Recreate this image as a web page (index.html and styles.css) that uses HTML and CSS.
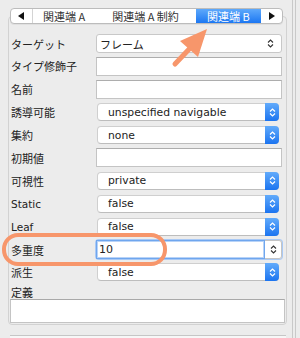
FILE: index.html
```html
<!DOCTYPE html>
<html lang="ja">
<head>
    <meta charset="UTF-8">
    <title>関連端 B</title>
    <link rel="stylesheet" href="styles.css">
</head>
<body>
<div class="window">
    <div class="frame">

        <!-- タブ -->
        <div class="tabs">
            <span class="seg nav">
                <svg width="6" height="8" viewBox="0 0 6 8"><path d="M6 0 L0 4 L6 8 Z" fill="#111"/></svg>
            </span>
            <span class="seg tab-a">関連端 A</span>
            <span class="seg tab-ac">関連端 A 制約</span>
            <span class="seg tab-b selected">関連端 B</span>
            <span class="seg nav">
                <svg width="6" height="8" viewBox="0 0 6 8"><path d="M0 0 L6 4 L0 8 Z" fill="#111"/></svg>
            </span>
        </div>

        <div class="box">
            <div class="form">
                <label>ターゲット</label>
                <div class="field select-plain">
                    <span class="value">フレーム</span>
                    <svg class="chev" width="7" height="11" viewBox="0 0 7 11"><path d="M1 4.5 L3.5 2 L6 4.5 M1 6.5 L3.5 9 L6 6.5" fill="none" stroke="#333" stroke-width="1.1"/></svg>
                </div>

                <label>タイプ修飾子</label>
                <div class="field text"></div>

                <label>名前</label>
                <div class="field text"></div>

                <label>誘導可能</label>
                <div class="popup">
                    <span class="value">unspecified navigable</span>
                    <span class="stepper"><svg width="7" height="11" viewBox="0 0 7 11"><path d="M1 4.5 L3.5 2 L6 4.5 M1 6.5 L3.5 9 L6 6.5" fill="none" stroke="#fff" stroke-width="1.2"/></svg></span>
                </div>

                <label>集約</label>
                <div class="popup">
                    <span class="value">none</span>
                    <span class="stepper"><svg width="7" height="11" viewBox="0 0 7 11"><path d="M1 4.5 L3.5 2 L6 4.5 M1 6.5 L3.5 9 L6 6.5" fill="none" stroke="#fff" stroke-width="1.2"/></svg></span>
                </div>

                <label>初期値</label>
                <div class="field text"></div>

                <label>可視性</label>
                <div class="popup">
                    <span class="value">private</span>
                    <span class="stepper"><svg width="7" height="11" viewBox="0 0 7 11"><path d="M1 4.5 L3.5 2 L6 4.5 M1 6.5 L3.5 9 L6 6.5" fill="none" stroke="#fff" stroke-width="1.2"/></svg></span>
                </div>

                <label class="latin">Static</label>
                <div class="popup">
                    <span class="value">false</span>
                    <span class="stepper"><svg width="7" height="11" viewBox="0 0 7 11"><path d="M1 4.5 L3.5 2 L6 4.5 M1 6.5 L3.5 9 L6 6.5" fill="none" stroke="#fff" stroke-width="1.2"/></svg></span>
                </div>

                <label class="latin">Leaf</label>
                <div class="popup">
                    <span class="value">false</span>
                    <span class="stepper"><svg width="7" height="11" viewBox="0 0 7 11"><path d="M1 4.5 L3.5 2 L6 4.5 M1 6.5 L3.5 9 L6 6.5" fill="none" stroke="#fff" stroke-width="1.2"/></svg></span>
                </div>

                <label>多重度</label>
                <div class="combo">
                    <span class="combo-text">10</span>
                    <span class="combo-btn"><svg width="7" height="11" viewBox="0 0 7 11"><path d="M1 4.5 L3.5 2 L6 4.5 M1 6.5 L3.5 9 L6 6.5" fill="none" stroke="#333" stroke-width="1.1"/></svg></span>
                </div>

                <label>派生</label>
                <div class="popup">
                    <span class="value">false</span>
                    <span class="stepper"><svg width="7" height="11" viewBox="0 0 7 11"><path d="M1 4.5 L3.5 2 L6 4.5 M1 6.5 L3.5 9 L6 6.5" fill="none" stroke="#fff" stroke-width="1.2"/></svg></span>
                </div>
            </div>

            <div class="def-label">定義</div>
            <div class="textarea"></div>
        </div>

        <div class="next"></div>
    </div>

    <!-- 注釈 -->
    <svg class="marks" width="300" height="338" viewBox="0 0 300 338">
        <rect x="4" y="235" width="161" height="29" rx="14" fill="none" stroke="#f7966b" stroke-width="4"/>
        <path d="M175 64 L194 44" stroke="#f7966b" stroke-width="5" stroke-linecap="round"/>
        <path d="M207 29 L180 41 L198 57 Z" fill="#f7966b"/>
    </svg>
</div>
</body>
</html>
```

FILE: styles.css
```css
/* 基本 */
body, html {
    margin: 0;
    padding: 0;
    background: #ececec;
    font-family: "Noto Sans CJK JP", "DejaVu Sans", sans-serif;
    font-size: 11px;
    color: #222;
}

.window {
    position: relative;
    width: 296px;
    height: 338px;
    padding-right: 2px;
    border-right: 1px solid #c9c9c9;
    box-sizing: border-box;
    overflow: hidden;
}

.frame {
    width: 293px;
    height: 338px;
    border-right: 1px solid #c9c9c9;
    box-sizing: border-box;
    padding-top: 8px;
}

/* タブ */
.tabs {
    position: relative;
    z-index: 1;
    display: flex;
    margin-left: 10px;
    width: 273px;
    height: 16px;
    background: #fff;
    border: 1px solid #bcbcbc;
    border-radius: 4px;
    box-sizing: border-box;
    box-shadow: 0 1px 0 rgba(0, 0, 0, 0.05);
    overflow: hidden;
}

.seg {
    display: flex;
    align-items: center;
    justify-content: center;
    line-height: 14px;
    color: #333;
}

.seg.nav {
    width: 21px;
}

.seg.nav:first-child {
    border-right: 1px solid #d4d4d4;
}

.tab-a { width: 63px; }
.tab-ac { width: 101px; }
.tab-b { width: 66px; }

.seg.selected {
    color: #fff;
    background: linear-gradient(#5ea9fb, #1c77f2);
}

/* グループ枠 */
.box {
    margin: -8px 0 0 8px;
    width: 279px;
    padding: 17px 0 1px 0;
    border: 1px solid #d2d2d2;
    border-radius: 4px;
    box-sizing: border-box;
}

.form {
    display: grid;
    grid-template-columns: 85px 186px;
    grid-auto-rows: 19px;
    row-gap: 3.9px;
    padding-left: 2px;
}

.form label {
    display: flex;
    align-items: center;
    color: #222;
}

.form label.latin {
    font-family: "DejaVu Sans", sans-serif;
    font-size: 10.5px;
}

.field {
    background: #fff;
    border: 1px solid #c4c4c4;
    border-top-color: #adadad;
    box-sizing: border-box;
    display: flex;
    align-items: center;
}

.select-plain {
    border-radius: 3px;
    border-color: #c8c8c8;
    justify-content: space-between;
    padding: 0 7px 0 3px;
}

.select-plain .value {
    font-size: 11px;
}

.popup {
    margin: 0 3px 0 1px;
    height: 18px;
    align-self: center;
    display: flex;
    align-items: center;
    justify-content: space-between;
    background: #fff;
    border: 1px solid #cfcfcf;
    border-bottom-color: #bdbdbd;
    border-radius: 4px;
    box-sizing: border-box;
    font-family: "DejaVu Sans", sans-serif;
    font-size: 10.8px;
    padding-left: 10px;
}

.stepper {
    width: 14px;
    height: 18px;
    margin: -1px -1px -1px 0;
    display: flex;
    align-items: center;
    justify-content: center;
    background: linear-gradient(#62abfb, #1b74f0);
    border-radius: 0 4px 4px 0;
}

.combo {
    display: flex;
    border-radius: 3px;
    box-shadow: 0 0 0 1px #a9c9f5;
}

.combo-text {
    flex: 1;
    background: #fff;
    border: 1px solid #6fa6ee;
    box-shadow: inset 0 0 0 1px #b8d3f7;
    display: flex;
    align-items: center;
    padding-left: 2px;
    font-family: "DejaVu Sans", sans-serif;
    font-size: 11px;
}

.combo-btn {
    width: 16px;
    background: #fff;
    border: 1px solid #c4c4c4;
    border-left: none;
    border-radius: 0 3px 3px 0;
    display: flex;
    align-items: center;
    justify-content: center;
}

.def-label {
    margin: 3px 0 0 2px;
    line-height: 14px;
}

.textarea {
    margin-left: 1px;
    width: 275px;
    height: 24px;
    background: #fff;
    border: 1px solid #c4c4c4;
    border-top-color: #a9a9a9;
    box-sizing: border-box;
}

.next {
    margin: 10px 0 0 10px;
    width: 276px;
    height: 4px;
    background: #f7f7f7;
    border-top: 1px solid #c6c6c6;
}

/* 注釈の重ね描き */
.marks {
    position: absolute;
    top: 0;
    left: 0;
    pointer-events: none;
}
```
